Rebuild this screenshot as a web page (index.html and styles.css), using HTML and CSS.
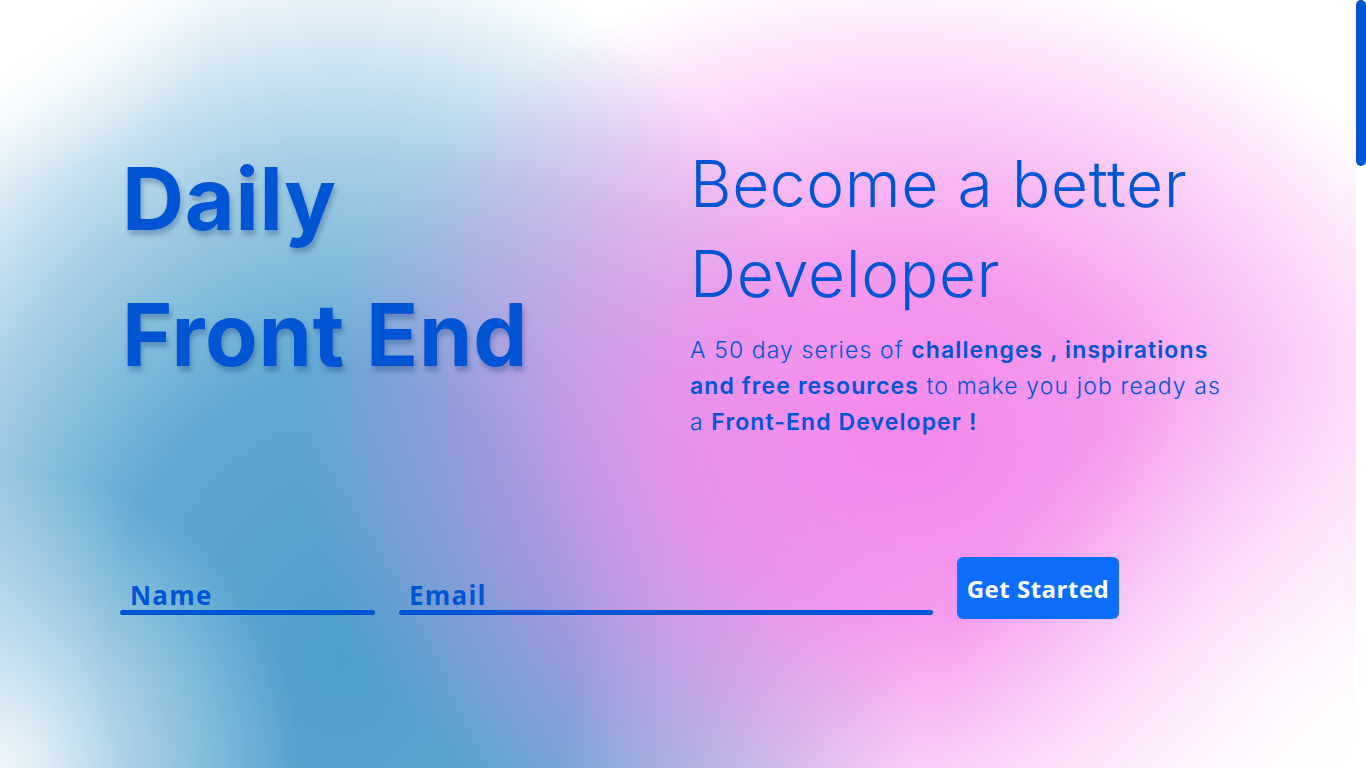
FILE: index.html
```html
<!DOCTYPE html>
<html lang="en">
<head>
<meta charset="utf-8">
<title>Daily Front End</title>
<link rel="stylesheet" href="styles.css">
</head>
<body>
<main class="page">
  <section class="hero">
    <div class="container">
      <div class="hero-row">
        <div class="hero-left">
          <h1 class="brand">Daily<br>Front End</h1>
        </div>
        <div class="hero-right">
          <h2 class="tagline">Become a better Developer</h2>
          <p class="intro">A 50 day series of <strong>challenges , inspirations and free resources</strong> to make you job ready as a <strong>Front-End Developer !</strong></p>
        </div>
      </div>
      <form class="signup" onsubmit="return false">
        <label class="field field-name"><input type="text" placeholder="Name"></label>
        <label class="field field-email"><input type="email" placeholder="Email"></label>
        <button type="submit" class="btn">Get Started</button>
      </form>
    </div>
  </section>
</main>
<div class="scroll-thumb" aria-hidden="true"></div>
</body>
</html>
```

FILE: styles.css
```css
* { box-sizing: border-box; }

html, body { background: #ffffff; }

body {
  margin: 0;
  overflow: hidden;
  font-family: "Inter", "Open Sans", sans-serif;
  color: #0055d4;
}

.page { padding-right: 10px; }

.scroll-thumb {
  position: fixed;
  top: 0;
  right: 0;
  width: 10px;
  height: 166px;
  border-radius: 5px;
  background: #0055d4;
}

.hero {
  height: 768px;
  background:
    radial-gradient(circle 300px at 0 100%,
      rgba(255,255,255,0.85) 0%, rgba(255,255,255,0.45) 45%, rgba(255,255,255,0) 100%),
    radial-gradient(circle 420px at 100% 100%,
      rgba(255,255,255,0.9) 0%, rgba(255,255,255,0.5) 45%, rgba(255,255,255,0) 100%),
    radial-gradient(ellipse 220px 180px at 0 0,
      rgba(255,255,255,0.85) 0%, rgba(255,255,255,0) 100%),
    radial-gradient(ellipse 600px 480px at 900px 440px,
      rgba(243,135,234,1) 0%, rgba(243,135,234,0.85) 35%, rgba(243,135,234,0.4) 70%, rgba(243,135,234,0) 100%),
    radial-gradient(ellipse 580px 720px at 340px 660px,
      rgba(78,159,204,1) 0%, rgba(78,159,204,0.9) 40%, rgba(78,159,204,0.5) 70%, rgba(78,159,204,0.08) 95%, rgba(78,159,204,0) 100%),
    #ffffff;
}

.container {
  width: 1140px;
  margin: 0 auto;
  padding: 131px 12px 0;
}

.hero-row {
  display: grid;
  grid-template-columns: 570px 546px;
}

.brand {
  margin: 0;
  padding-left: 2px;
  font-size: 86px;
  font-weight: 700;
  line-height: 136px;
  letter-spacing: 0.7px;
  color: #0055d4;
  text-shadow: 2px 5px 5px rgba(0, 40, 110, 0.28);
}

.tagline {
  margin: 8px 0 0;
  font-size: 64px;
  font-weight: 300;
  line-height: 90px;
  letter-spacing: 0.6px;
  color: #0055d4;
}

.intro {
  margin: 13px 0 0;
  font-size: 23px;
  font-weight: 300;
  line-height: 36px;
  letter-spacing: 1.1px;
  color: #0055d4;
}
.intro strong { font-weight: 600; }

.signup {
  display: flex;
  align-items: flex-start;
  gap: 24px;
  margin-top: 117px;
}

.field {
  display: flex;
  flex-direction: column;
}
.field::after {
  content: "";
  height: 5px;
  border-radius: 3px;
  background: #0055d4;
}
.field-name { width: 255px; }
.field-email { width: 534px; }

.field input {
  height: 53px;
  padding: 22px 10px 0;
  border: none;
  outline: none;
  background: transparent;
  font-family: "Open Sans", sans-serif;
  font-size: 26px;
  font-weight: 700;
  letter-spacing: 1.2px;
  color: #0055d4;
}
.field input::placeholder { color: #0055d4; opacity: 1; }

.btn {
  width: 162px;
  height: 62px;
  padding: 0;
  border: none;
  border-radius: 6px;
  background: #0d6efd;
  color: #ffffff;
  font-family: "Open Sans", sans-serif;
  font-size: 24px;
  font-weight: 700;
  letter-spacing: 0.5px;
}
```
